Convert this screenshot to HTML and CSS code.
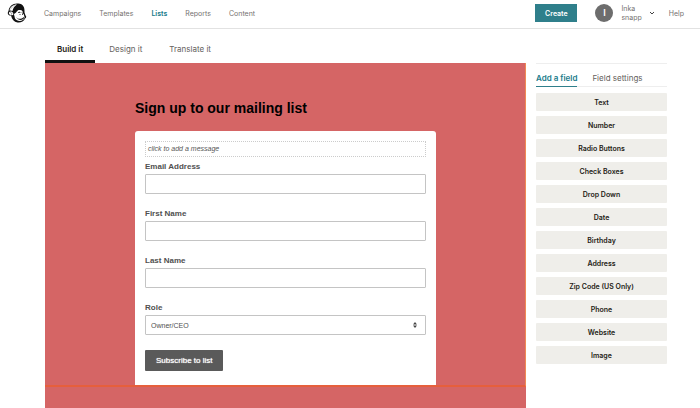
FILE: index.html
```
<!DOCTYPE html>
<html lang="en">
<head>
<meta charset="utf-8">
<title>Form builder | Mailchimp</title>
<link rel="stylesheet" href="styles.css">
</head>
<body>

<header class="topbar">
  <a class="logo" href="#" aria-label="Mailchimp">
    <svg viewBox="0 0 40 40" width="20" height="20">
      <path d="M8 25C2 26 0 20 3 16C4 7 11 1 20 1C25 0 31 2 33 7C35 10 35 15 35 19L37 25C39 26 39 30 36 31C34 37 27 40 21 39C14 38 10 33 8 25Z" fill="#111"/>
      <path d="M5 15C6 8 12 3 20 3C14 7 12 11 11 16C8 15 6 15 5 15Z" fill="#fff"/>
      <path d="M7 13C9 9 12 6 16 4" fill="none" stroke="#888" stroke-width="1"/>
      <path d="M4 19C6 16 11 17 12 20C14 23 12 26 8 24C5 24 3 22 4 19Z" fill="#fff"/>
      <path d="M7 19C9 19 10 21 9 23" fill="none" stroke="#111" stroke-width="1"/>
      <path d="M17 20C20 18 20 14 25 14C30 13 32 17 32 21C34 23 35 25 34 27C36 27 37 28 35 30C33 35 26 38 19 34C16 32 15 29 15 26C13 23 14 21 17 20Z" fill="#fff"/>
      <path d="M18 28C23 34 30 32 35 27L35 29C32 35 23 36 18 28Z" fill="#111"/>
      <path d="M22 20C23 18 26 18 27 20M30 19L31 21" fill="none" stroke="#111" stroke-width="2"/>
      <circle cx="26" cy="23" r="1" fill="#111"/>
      <circle cx="31" cy="23" r="1" fill="#111"/>
    </svg>
  </a>
  <nav class="main-nav">
    <a href="#">Campaigns</a>
    <a href="#">Templates</a>
    <a href="#" class="current">Lists</a>
    <a href="#">Reports</a>
    <a href="#">Content</a>
  </nav>
  <button type="button" class="create">Create</button>
  <div class="avatar">I</div>
  <button type="button" class="account">
    <span>Inka<br>snapp</span>
    <svg viewBox="0 0 6 4" width="6" height="4"><path d="M1 1L3 3L5 1" fill="none" stroke="#444" stroke-width="1"/></svg>
  </button>
  <a class="help" href="#">Help</a>
</header>

<nav class="tabs">
  <a href="#" class="active">Build it</a>
  <a href="#">Design it</a>
  <a href="#">Translate it</a>
</nav>

<main class="builder">
  <section class="canvas">
    <div class="preview">
      <h1>Sign up to our mailing list</h1>
      <form class="card">
        <p class="message">click to add a message</p>
        <div class="field">
          <label for="email">Email Address</label>
          <input type="email" id="email">
        </div>
        <div class="field">
          <label for="fname">First Name</label>
          <input type="text" id="fname">
        </div>
        <div class="field">
          <label for="lname">Last Name</label>
          <input type="text" id="lname">
        </div>
        <div class="field">
          <label for="role">Role</label>
          <div class="select">
            <select id="role">
              <option>Owner/CEO</option>
            </select>
            <svg viewBox="0 0 4 6" width="4" height="6"><path d="M0 2.5L2 0L4 2.5ZM0 3.5L2 6L4 3.5Z" fill="#444"/></svg>
          </div>
        </div>
        <button type="button" class="subscribe">Subscribe to list</button>
      </form>
    </div>
  </section>

  <aside class="sidebar">
    <nav class="side-tabs">
      <a href="#" class="active">Add a field</a>
      <a href="#">Field settings</a>
    </nav>
    <div class="field-types">
      <button type="button">Text</button>
      <button type="button">Number</button>
      <button type="button">Radio Buttons</button>
      <button type="button">Check Boxes</button>
      <button type="button">Drop Down</button>
      <button type="button">Date</button>
      <button type="button">Birthday</button>
      <button type="button">Address</button>
      <button type="button">Zip Code (US Only)</button>
      <button type="button">Phone</button>
      <button type="button">Website</button>
      <button type="button">Image</button>
    </div>
  </aside>
</main>

</body>
</html>
```
FILE: styles.css
```
* {
  box-sizing: border-box;
}

body {
  display: flex;
  flex-direction: column;
  min-height: 100vh;
  margin: 0;
  background: #fff;
  color: #241c15;
  font-family: Inter, "Liberation Sans", sans-serif;
  font-size: 7px;
}

a {
  color: inherit;
  text-decoration: none;
}

button {
  border: 0;
  padding: 0;
  font-family: inherit;
  font-size: inherit;
  cursor: pointer;
}

/* top bar */
.topbar {
  display: flex;
  align-items: center;
  height: 29px;
  padding: 0 16px 2px 7px;
  border-bottom: 1px solid #e2e2e2;
  color: #75726f;
}

.logo {
  display: flex;
  margin-right: 17px;
}

.main-nav {
  display: flex;
  flex: 1;
  gap: 18px;
}

.main-nav .current {
  color: #187a8a;
  font-weight: 600;
}

.create {
  width: 42px;
  height: 18px;
  background: #2f7f8b;
  color: #fff;
  font-weight: 600;
}

.avatar {
  width: 18px;
  height: 18px;
  margin: 0 8px 0 18px;
  border-radius: 50%;
  background: #6d6d6d;
  color: #fff;
  font-size: 9px;
  font-weight: 600;
  line-height: 18px;
  text-align: center;
}

.account {
  display: flex;
  align-items: center;
  gap: 7px;
  margin-right: 14px;
  background: none;
  color: inherit;
  line-height: 9px;
  text-align: left;
}

/* step tabs */
.tabs {
  display: flex;
  padding-left: 45px;
  font-size: 8px;
  color: #65615d;
}

.tabs a {
  padding: 15px 13px 9px 14px;
  line-height: 10px;
}

.tabs .active {
  padding: 15px 12px 6px;
  border-bottom: 3px solid #111;
  color: #241c15;
  font-weight: 600;
}

/* builder */
.builder {
  display: flex;
  flex: 1;
  gap: 10px;
  padding: 0 33px 0 45px;
}

.canvas {
  flex: 1;
  background: #d56565;
}

.preview {
  padding: 36px 89px 0 90px;
  border-right: 1px solid #f08a55;
  border-bottom: 2px solid #e65f3c;
  font-family: "Liberation Sans", Arial, sans-serif;
}

.preview h1 {
  margin: 0 0 14px;
  color: #000;
  font-size: 14px;
  line-height: 18px;
}

.card {
  padding: 10px 10px 14px;
  border-radius: 3px 3px 0 0;
  background: #fff;
}

.message {
  margin: 0 0 5px;
  padding: 0 2px;
  border: 1px dotted #ccc;
  color: #555;
  font-size: 7px;
  font-style: italic;
  line-height: 14px;
}

.field {
  margin-bottom: 15px;
}

.field label {
  display: block;
  margin-bottom: 2px;
  color: #505050;
  font-size: 8px;
  font-weight: bold;
  line-height: 10px;
}

.field input,
.field select {
  display: block;
  width: 100%;
  height: 20px;
  padding: 0 5px;
  border: 1px solid #c4c4c4;
  border-radius: 1px;
  background: #fff;
  color: #505050;
  font-family: inherit;
  font-size: 7px;
  appearance: none;
}

.select {
  position: relative;
}

.select svg {
  position: absolute;
  top: 7px;
  right: 9px;
  pointer-events: none;
}

.subscribe {
  display: block;
  height: 21px;
  padding: 0 11px;
  border-radius: 1px;
  background: #5a5a5a;
  color: #fff;
  font-size: 8px;
  text-shadow: 0 0 1px #fff;
}

/* field list */
.sidebar {
  flex: 0 0 131px;
  border-top: 1px solid #eee;
}

.side-tabs {
  display: flex;
  gap: 15px;
  margin-bottom: 6px;
  border-bottom: 1px solid #eee;
  color: #65615d;
  font-size: 8px;
  line-height: 10px;
}

.side-tabs a {
  padding: 9px 0 3px;
}

.side-tabs .active {
  margin-bottom: -1px;
  border-bottom: 1px solid #2f7f8b;
  color: #187a8a;
  font-weight: 600;
}

.field-types {
  display: grid;
  gap: 5px;
}

.field-types button {
  height: 18px;
  border-radius: 1px;
  background: #efeeea;
  color: #241c15;
  font-weight: 600;
}
```
